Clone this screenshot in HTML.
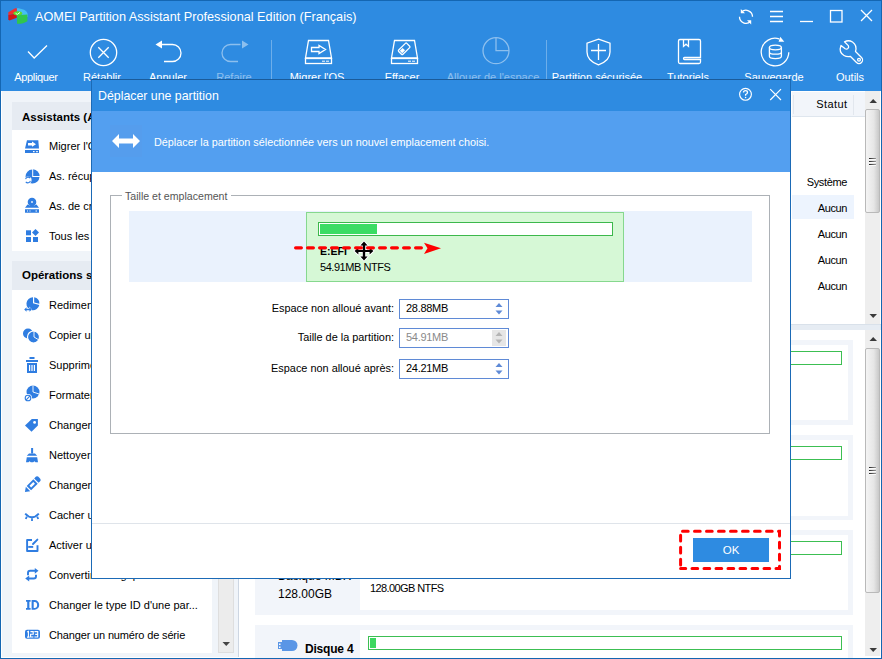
<!DOCTYPE html>
<html><head><meta charset="utf-8">
<style>
*{margin:0;padding:0;box-sizing:border-box}
html,body{width:882px;height:659px;overflow:hidden;background:#fff}
body{position:relative;font-family:"Liberation Sans",sans-serif;font-size:11px;color:#000}
.a{position:absolute}
.t{position:absolute;white-space:nowrap;line-height:1}
svg{position:absolute;overflow:visible}
</style></head><body>

<!-- window background -->
<div class="a" style="left:0;top:0;width:882px;height:659px;background:#2e8be1"></div>
<!-- main content area -->
<div class="a" style="left:1px;top:91px;width:880px;height:567px;background:#fff"></div>

<!-- LEFT PANEL -->
<div id="left" class="a" style="left:2px;top:91px;width:236px;height:566px;background:#f0f4f9"></div>
<div class="a" style="left:238px;top:91px;width:1px;height:566px;background:#cdd6e2"></div>
<div class="a" style="left:12px;top:102px;width:200px;height:28px;background:#e6ebf2"></div>
<div class="a" style="left:12px;top:130px;width:200px;height:121px;background:#fff"></div>
<div class="a" style="left:12px;top:261px;width:200px;height:29px;background:#e6ebf2"></div>
<div class="a" style="left:12px;top:290px;width:200px;height:363px;background:#fff"></div>
<div class="a" style="left:218px;top:290px;width:16px;height:363px;background:#ececec;border:1px solid #dedede"></div>
<svg width="10" height="10" style="left:222px;top:641px"><path d="M0.5,1 H8 L4.25,5 Z" fill="#444"/></svg>
<div style="position:absolute;left:0;top:0;font-size:11px;color:#000">
<div class="t" style="left:22px;top:112px;font-weight:bold;font-size:11.5px">Assistants (Alt+A)</div>
<div class="t" style="left:49px;top:141px">Migrer l'OS vers SSD</div>
<div class="t" style="left:49px;top:171px">As. récupération de partition</div>
<div class="t" style="left:49px;top:201px">As. de création de média</div>
<div class="t" style="left:49px;top:231px">Tous les outils</div>
<div class="t" style="left:22px;top:270px;font-weight:bold;font-size:11.5px">Opérations sur la partition</div>
<div class="t" style="left:49px;top:300px">Redimensionner/Déplacer</div>
<div class="t" style="left:49px;top:330px">Copier une partition</div>
<div class="t" style="left:49px;top:360px">Supprimer la partition</div>
<div class="t" style="left:49px;top:390px">Formater la partition</div>
<div class="t" style="left:49px;top:420px">Changer la lettre</div>
<div class="t" style="left:49px;top:450px">Nettoyer la partition</div>
<div class="t" style="left:49px;top:480px">Changer l'étiquette</div>
<div class="t" style="left:49px;top:510px">Cacher une partition</div>
<div class="t" style="left:49px;top:540px">Activer une partition</div>
<div class="t" style="left:49px;top:570px">Convertir en logique</div>
<div class="t" style="left:49px;top:600px">Changer le type ID d'une par...</div>
<div class="t" style="left:49px;top:630px;letter-spacing:-0.15px">Changer un numéro de série</div>
</div>
<svg width="240" height="660" style="left:0;top:0" fill="#2f7de1" stroke="none">
  <!-- migrer -->
  <path d="M27,140.2 H38.3 L39,148.5 H25 Z"/>
  <path d="M25,150 H39 V153 H25 Z M33,151 V152.2 H34.6 V151 Z M36.2,151 V152.2 H37.8 V151 Z" fill-rule="evenodd"/>
  <path d="M28,143 H32 V141.6 L36,144.2 L32,146.8 V145.4 H28 Z" fill="#fff"/>
  <!-- recup -->
  <path d="M32.2,169.5 A7,7 0 1 0 39.5,177 H32.2 Z"/>
  <path d="M33.2,169.2 A7,7 0 0 1 39.6,176 H33.2 Z"/>
  <circle cx="28" cy="180" r="3.6" fill="#fff"/>
  <path d="M25.6,179.2 A2.6,2.6 0 0 1 30.2,178.2 M30.4,180.8 A2.6,2.6 0 0 1 25.8,181.8" stroke="#2f7de1" stroke-width="1.1" fill="none"/>
  <!-- creation media -->
  <circle cx="32" cy="202" r="4.3"/>
  <rect x="31.2" y="201.2" width="1.6" height="1.6" fill="#fff"/>
  <path d="M27.5,204.5 Q32,207 36.5,204.5 L39,207.8 H25 Z"/>
  <path d="M25,209.3 H39 V212.8 H25 Z M27,210.5 V211.6 H28 V210.5 Z M29.5,210.5 V211.6 H30.5 V210.5 Z M35.5,210.5 V211.6 H37 V210.5 Z" fill-rule="evenodd"/>
  <!-- tous -->
  <rect x="26" y="230.3" width="5" height="5"/><rect x="26" y="237" width="5" height="5"/><rect x="33" y="237" width="5" height="5"/>
  <path d="M35.5,229 L39,232.5 L35.5,236 L32,232.5 Z"/>
  <!-- redim -->
  <path d="M33,297.2 A6.5,6.5 0 1 0 39.3,305 L33,303.3 Z"/>
  <path d="M34.2,297.3 A6.5,6.5 0 0 1 39.4,303.8 L34.2,302.5 Z"/>
  <path d="M24.2,309.5 L26.5,307.3 V308.7 H29.5 V307.3 L31.8,309.5 L29.5,311.7 V310.3 H26.5 V311.7 Z" stroke="#fff" stroke-width="0.8" paint-order="stroke"/>
  <!-- copier -->
  <circle cx="28" cy="333.5" r="5"/>
  <circle cx="33.5" cy="337" r="6" stroke="#fff" stroke-width="1.2"/>
  <path d="M34,331 V337 L39,340" stroke="#fff" stroke-width="0.9" fill="none"/>
  <!-- supprimer -->
  <rect x="29.5" y="357" width="5" height="2"/><rect x="26" y="360" width="12" height="2"/>
  <path d="M27,363 H37 V373 H27 Z M29,365 V371 H30.2 V365 Z M31.4,365 V371 H32.6 V365 Z M33.8,365 V371 H35 V365 Z" fill-rule="evenodd"/>
  <!-- formater -->
  <circle cx="33" cy="392" r="6.5"/>
  <path d="M33,385.5 V392 L39,394" stroke="#fff" stroke-width="0.9" fill="none"/>
  <circle cx="28" cy="398" r="4" fill="#fff"/>
  <circle cx="28" cy="398" r="2.8" stroke="#2f7de1" stroke-width="1.1" fill="none"/>
  <path d="M26.2,399.8 L29.8,396.2" stroke="#2f7de1" stroke-width="1.1"/>
  <!-- changer lettre: tag -->
  <path d="M25,425.4 L31.8,418.9 H37.9 V425.6 L31.5,431.8 Z"/><circle cx="34.6" cy="422.4" r="1.4" fill="#fff"/>
  <!-- nettoyer: brush -->
  <rect x="31.1" y="448" width="2" height="5.5"/>
  <path d="M29,453.4 H35 L37.2,455.8 H26.8 Z"/>
  <path d="M26.8,457.2 H37.2 L38,462.2 H35.5 L34.5,461.2 L33.2,462.2 H30.8 L29.5,461.2 L28.5,462.2 H26 Z"/>
  <!-- changer etiquette: pencil -->
  <g transform="translate(32,485) rotate(-45)">
    <path d="M-10,0 L-5.6,-3.1 V3.1 Z"/>
    <path d="M-4.4,-3.1 H5 V3.1 H-4.4 Z M-2.4,-1.2 V1.2 H3 V-1.2 Z" fill-rule="evenodd"/>
    <path d="M6.2,-3.1 H8.4 A2,3.1 0 0 1 8.4,3.1 H6.2 Z"/>
  </g>
  <!-- cacher: eye closed -->
  <path d="M25.2,513.6 Q32,521 38.8,513.6" stroke="#2f7de1" stroke-width="1.9" fill="none"/>
  <path d="M26.8,516.6 L25.8,519 M32,518.3 V521 M37.2,516.6 L38.2,519" stroke="#2f7de1" stroke-width="1.8"/>
  <!-- activer -->
  <path d="M32,540 H27.1 V551 H37.5 V545.2" stroke="#2f7de1" stroke-width="1.9" fill="none" stroke-linejoin="round"/>
  <path d="M28.2,546.9 H33.2" stroke="#2f7de1" stroke-width="1.9"/>
  <path d="M33,544 L37.4,539.6" stroke="#2f7de1" stroke-width="1.9" stroke-linecap="round"/>
  <!-- convertir -->
  <path d="M28,575.2 V573 Q28,570.8 30.2,570.8 H35.5 M36,574.8 V576.5 Q36,578.5 33.8,578.5 H28.5" stroke="#2f7de1" stroke-width="1.9" fill="none"/>
  <path d="M34.8,567.9 L38.5,570.8 L34.8,573.7 Z M29.2,575.6 L25.2,578.5 L29.2,581.4 Z"/>
  <!-- ID -->
  <path d="M26,600 H30.6 V601.8 H29.4 V608 H30.6 V609.8 H26 V608 H27.2 V601.8 H26 Z"/>
  <path d="M31.6,600 H34.6 A4.6,4.9 0 0 1 34.6,609.8 H31.6 Z M33.7,601.9 V607.9 H34.6 A2.5,3 0 0 0 34.6,601.9 Z" fill-rule="evenodd"/>
  <!-- 123 -->
  <rect x="25" y="629.8" width="15" height="9" rx="2"/>
  <path d="M27.2,632 L28.4,631.4 V637.1 M27,637.1 H29.6 M30.4,631.6 H33.2 V634.2 H30.6 V637 H33.4 M34.4,631.6 H37.7 V637 H34.4 M35.2,634.3 H37.7" stroke="#fff" stroke-width="1.15" fill="none"/>
</svg>


<!-- RIGHT PANEL -->
<div class="a" style="left:792px;top:92px;width:73px;height:25px;background:#f2f5fa;border-bottom:1px solid #dfe6ee"></div>
<div class="a" style="left:853px;top:95px;width:1px;height:20px;background:#e2e7ee"></div>
<div class="a" style="left:793px;top:95px;width:1px;height:19px;background:#e2e7ee"></div>
<div class="t" style="left:700px;top:99px;width:147.4px;text-align:right;letter-spacing:0.4px">Statut</div>
<div class="a" style="left:792px;top:195px;width:62px;height:24px;background:#edf4fe"></div>
<div class="t" style="left:700px;top:177px;width:147px;text-align:right;letter-spacing:-0.35px">Système</div>
<div class="t" style="left:700px;top:203px;width:147px;text-align:right;letter-spacing:-0.4px">Aucun</div>
<div class="t" style="left:700px;top:229px;width:147px;text-align:right;letter-spacing:-0.4px">Aucun</div>
<div class="t" style="left:700px;top:255px;width:147px;text-align:right;letter-spacing:-0.4px">Aucun</div>
<div class="t" style="left:700px;top:281px;width:147px;text-align:right;letter-spacing:-0.4px">Aucun</div>
<!-- top scrollbar -->
<div class="a" style="left:865px;top:91px;width:15px;height:233px;background:#eeeeee"></div>
<div class="a" style="left:865px;top:109px;width:15px;height:104px;background:linear-gradient(to right,#f4f4f4,#e6e6e6 60%,#c8c8c8);border:1px solid #b9b9b9;border-radius:2px"></div>
<svg width="16" height="240" style="left:865px;top:91px">
 <path d="M4.5,12 H12 L8.2,8 Z" fill="#3a3a3a"/>
 <path d="M4.5,223 H12 L8.2,227 Z" fill="#3a3a3a"/>
 <defs><linearGradient id="gr" x1="0" x2="1"><stop offset="0" stop-color="#222"/><stop offset="1" stop-color="#999"/></linearGradient></defs><path d="M4,67.5 H11 M4,70.5 H11 M4,73.5 H11" stroke="url(#gr)" stroke-width="1.1"/><path d="M4,68.5 H11 M4,71.5 H11 M4,74.5 H11" stroke="#fff" stroke-width="1" stroke-opacity="0.8"/>
</svg>
<!-- splitter -->
<div class="a" style="left:239px;top:324px;width:642px;height:6px;background:#e6ecf3;border-top:1px solid #d9e1ea"></div>
<!-- bottom scrollbar -->
<div class="a" style="left:865px;top:330px;width:15px;height:326px;background:#eeeeee"></div>
<div class="a" style="left:865px;top:348px;width:15px;height:245px;background:linear-gradient(to right,#f4f4f4,#e6e6e6 60%,#c8c8c8);border:1px solid #b9b9b9;border-radius:2px"></div>
<svg width="16" height="330" style="left:865px;top:330px">
 <path d="M4.5,11 H12 L8.2,7 Z" fill="#3a3a3a"/>
 <path d="M4.5,318 H12 L8.2,322 Z" fill="#3a3a3a"/>
 <path d="M4,137.5 H11 M4,140.5 H11 M4,143.5 H11" stroke="url(#gr)" stroke-width="1.1"/><path d="M4,138.5 H11 M4,141.5 H11 M4,144.5 H11" stroke="#fff" stroke-width="1" stroke-opacity="0.8"/>
</svg>
<!-- disk cards -->
<div class="a" style="left:255px;top:340px;width:598px;height:85px;background:#f2f5fa"><div class="a" style="left:105px;top:5px;width:488px;height:75px;background:#fff"></div><div class="a" style="left:113px;top:11px;width:474px;height:14px;border:1px solid #3cbf52;background:#fff"></div></div>
<div class="a" style="left:255px;top:435px;width:598px;height:85px;background:#f2f5fa"><div class="a" style="left:105px;top:5px;width:488px;height:76px;background:#fff"></div><div class="a" style="left:113px;top:11px;width:474px;height:14px;border:1px solid #3cbf52;background:#fff"></div></div>
<div class="a" style="left:255px;top:530px;width:598px;height:85px;background:#f2f5fa"><div class="a" style="left:105px;top:5px;width:488px;height:75px;background:#fff"></div><div class="a" style="left:113px;top:11px;width:474px;height:14px;border:1px solid #3cbf52;background:#fff"></div>
 <div class="t" style="left:23px;top:40px;font-size:12px">Basique MBR</div>
 <div class="t" style="left:23px;top:58px;font-size:12px">128.00GB</div>
 <div class="t" style="left:115px;top:53px;letter-spacing:-0.6px">128.00GB NTFS</div>
</div>
<div class="a" style="left:255px;top:625px;width:598px;height:40px;background:#f2f5fa"><div class="a" style="left:105px;top:5px;width:488px;height:40px;background:#fff"></div><div class="a" style="left:113px;top:11px;width:474px;height:14px;border:1px solid #3cbf52;background:#fff"><div class="a" style="left:1px;top:1px;width:6px;height:10px;background:#3cd860"></div></div>
 <div class="t" style="left:50px;top:18px;font-size:12px;font-weight:bold;letter-spacing:-0.2px">Disque 4</div>
 <svg width="24" height="14" style="left:22px;top:14px"><path d="M5,1 H15 A5.5,5.5 0 0 1 15,12 H5 Z" fill="#5a96e6"/><rect x="1" y="3" width="4" height="7" fill="#5a96e6"/><rect x="2" y="4.5" width="1.5" height="1.5" fill="#fff"/><rect x="2" y="7.5" width="1.5" height="1.5" fill="#fff"/></svg>
</div>

<!-- title bar -->
<div class="t" style="left:35px;top:11px;font-size:12.7px;color:#fff">AOMEI Partition Assistant Professional Edition (Français)</div>


<!-- TOOLBAR ICONS -->
<svg width="882" height="91" style="left:0;top:0" fill="none" stroke="#fff" stroke-width="1.3">
  <!-- logo -->
  <g stroke="none">
    <path d="M16.7,8.2 C22,8.2 27.6,10.5 27.7,14.2 V17 L22,15.2 C22,13 20,11.6 16.7,11.5 Z" fill="#45bef2"/>
    <path d="M8.3,12.2 L15.2,8.2 H16.8 V13.5 L8.3,15 Z" fill="#f03030"/>
    <path d="M8.3,15 L16.8,13.5 V17.8 L9.5,20.5 L8.3,19.2 Z" fill="#d41616"/>
    <path d="M17,15.2 L27.4,14.4 V21.2 C25,23 20.5,24 17,23.8 Z" fill="#30c64c"/>
    <ellipse cx="17.8" cy="13.3" rx="4.4" ry="2.1" fill="#5ddc2a"/>
    <path d="M15.6,13.3 L17.3,14.4 L20,12.4" stroke="#e8ffe0" stroke-width="1" fill="none"/>
  </g>
  <!-- window controls -->
  <path d="M741.4,12.2 A6.5,6.5 0 0 1 752.5,16.8 M739.5,16.8 A6.5,6.5 0 0 0 750.6,21.4"/>
  <path d="M740.8,9 L740.8,13.3 L745,13.3 Z M751.2,24.6 L751.2,20.3 L747,20.3 Z" fill="#fff" stroke="none"/>
  <path d="M770,11.5 H783 M770,16.5 H783 M770,21.5 H783"/>
  <path d="M800,21.5 H813"/>
  <rect x="830.5" y="10.5" width="11.5" height="11.5"/>
  <path d="M861,10 L872,21 M872,10 L861,21"/>
  <!-- Appliquer -->
  <path d="M28,51.5 L34.2,58 L47,45.5"/>
  <!-- Retablir -->
  <circle cx="103.5" cy="52.5" r="13.2"/>
  <path d="M98.3,47.3 L108.7,57.7 M108.7,47.3 L98.3,57.7"/>
  <!-- Annuler -->
  <path d="M161.5,44.5 H172.5 A8.5,8.5 0 0 1 172.5,61.5 H164"/>
  <path d="M155.5,44.5 L162,40.5 L162,48.5 Z" fill="#fff" stroke="none"/>
  <!-- Refaire -->
  <g opacity="0.45">
  <path d="M240.5,44.5 H230.5 A8.5,8.5 0 0 0 230.5,61.5 H238"/>
  <path d="M248.5,44.5 L242,40.5 L242,48.5 Z" fill="#fff" stroke="none"/>
  </g>
  <path d="M271.5,40 V91" stroke-opacity="0.3" stroke-width="1"/>
  <!-- Migrer OS -->
  <g id="disk">
  <path d="M308.5,40.5 H328.5 L331.5,58 H305.5 Z"/>
  <rect x="305.5" y="58.5" width="26" height="5"/>
  <path d="M322,61.2 H325 M326,61.2 H329" stroke-width="1"/>
  </g>
  <path d="M311.5,47.5 H319 V45.5 L325.5,49.5 L319,53.5 V51.5 H311.5 Z"/>
  <!-- Effacer -->
  <g transform="translate(86,0)">
  <path d="M308.5,40.5 H328.5 L331.5,58 H305.5 Z"/>
  <rect x="305.5" y="58.5" width="26" height="5"/>
  <path d="M322,61.2 H325 M326,61.2 H329" stroke-width="1"/>
  </g>
  <g transform="rotate(-45 404 49)">
  <rect x="398.5" y="46" width="11.5" height="6" rx="1"/>
  <rect x="399.8" y="47.3" width="4" height="3.4" fill="#fff" stroke="none"/>
  </g>
  <!-- Allouer -->
  <g opacity="0.45">
  <circle cx="496" cy="50.7" r="13"/>
  <path d="M496,37.7 V50.7 H509"/>
  </g>
  <path d="M546.5,40 V91" stroke-opacity="0.3" stroke-width="1"/>
  <!-- Partition securisee -->
  <path d="M598.5,39.2 L610,43.2 V52 C610,58.5 605,62.5 598.5,64.8 C592,62.5 587,58.5 587,52 V43.2 Z"/>
  <path d="M591,50.5 H606 M598.5,44 V60"/>
  <!-- Tutoriels -->
  <path d="M700.5,57.5 H684.5 A1,1 0 0 0 684.5,59.5 H700.5 V62 Q700.5,63.5 699,63.5 H680 Q678.5,63.5 678.5,62 V41 Q678.5,39.5 680,39.5 H699 Q700.5,39.5 700.5,41 Z"/>
  <path d="M683.5,39.5 V46.4 L686,44.2 L688.5,46.4 V39.5"/>
  <!-- Sauvegarde -->
  <path d="M779.2,38.9 A13.8,13.8 0 1 0 788.8,52.3"/>
  <path d="M780.2,36.8 L784.3,41.8 L778.6,41.8 Z" fill="#fff" stroke="none"/>
  <ellipse cx="775.4" cy="47.5" rx="6" ry="2.3"/>
  <path d="M769.4,47.5 V56.3 A6,2.3 0 0 0 781.4,56.3 V47.5 M769.4,51.9 A6,2.3 0 0 0 781.4,51.9"/>
  <!-- Outils -->
  <path d="M841,45.5 C839.5,49.5 840.5,53.5 844,55.5 C846,56.7 848.5,56.8 850.5,56.5 L856.5,62.5 A2.9,2.9 0 0 0 861.5,57.5 L855.5,51.5 C856.5,48 855.5,44 852.5,42 C850,40.5 847,40.5 844.5,41.8 L848.3,45.6 A2.3,2.3 0 0 1 845.2,48.8 Z" stroke-linejoin="round"/>
  <circle cx="859" cy="59.8" r="1.4"/>
</svg>
<!-- TOOLBAR LABELS -->
<div style="position:absolute;left:0;top:0;font-size:11px;letter-spacing:0px;color:#fff">
<div class="t" style="left:-24px;top:72px;width:120px;text-align:center;letter-spacing:-0.35px">Appliquer</div>
<div class="t" style="left:42px;top:72px;width:120px;text-align:center">Rétablir</div>
<div class="t" style="left:108px;top:72px;width:120px;text-align:center">Annuler</div>
<div class="t" style="left:174px;top:72px;width:120px;text-align:center;opacity:0.45">Refaire</div>
<div class="t" style="left:257px;top:72px;width:120px;text-align:center">Migrer l'OS</div>
<div class="t" style="left:342px;top:72px;width:120px;text-align:center">Effacer</div>
<div class="t" style="left:433px;top:72px;width:120px;text-align:center;opacity:0.45">Allouer de l'espace</div>
<div class="t" style="left:537px;top:72px;width:120px;text-align:center">Partition sécurisée</div>
<div class="t" style="left:628px;top:72px;width:120px;text-align:center">Tutoriels</div>
<div class="t" style="left:714px;top:72px;width:120px;text-align:center">Sauvegarde</div>
<div class="t" style="left:790px;top:72px;width:120px;text-align:center">Outils</div>
</div>

<!-- window border -->
<div class="a" style="left:0;top:0;width:882px;height:659px;border:1px solid #1466b2"></div>

<!-- DIALOG -->
<div id="dlg" class="a" style="left:91px;top:79px;width:700px;height:500px;background:#fff;border:1px solid #1b6ab6;border-top-color:#1a5b9a">
  <div class="a" style="left:0;top:0;width:698px;height:31px;background:#2e8be1"></div>
  <div class="a" style="left:0;top:31px;width:698px;height:61px;background:#539ff0"></div>
  <div class="t" style="left:6px;top:10px;font-size:12.35px;color:#fff">Déplacer une partition</div>
  <svg width="700" height="100" style="left:-1px;top:-1px" fill="none" stroke="#fff" stroke-width="1.2">
    <circle cx="654.5" cy="15.3" r="5.9" stroke-width="1.15"/>
    <path d="M652.5,13.6 Q652.5,11.7 654.5,11.7 Q656.5,11.7 656.5,13.5 Q656.5,14.7 654.6,15.5 V16.7" stroke-width="1.3"/>
    <circle cx="654.6" cy="18.5" r="0.8" fill="#fff" stroke="none"/>
    <path d="M679.2,10.2 L690,21 M690,10.2 L679.2,21" stroke-width="1.15"/>
    <rect x="19" y="46" width="32" height="32" fill="#559ded" stroke="none"/>
    <path d="M21,62 L28,55 V59.5 H42 V55 L49,62 L42,69 V64.5 H28 V69 Z" fill="#fff" stroke="none"/>
  </svg>
  <div class="t" style="left:62px;top:57px;font-size:10.83px;color:#fff">Déplacer la partition sélectionnée vers un nouvel emplacement choisi.</div>
  <!-- group box -->
  <div class="a" style="left:18px;top:115px;width:660px;height:239px;border:1px solid #acb1b6"></div>
  <div class="t" style="left:30px;top:111px;padding:0 4px 0 3px;background:#fff;color:#555;font-size:10.6px">Taille et emplacement</div>
  <div class="a" style="left:37px;top:131px;width:623px;height:71px;background:#eaf2fd"></div>
  <div class="a" style="left:214px;top:132px;width:318px;height:70px;background:#d6f8d6;border:1px solid #86d88e"></div>
  <div class="a" style="left:226px;top:142px;width:295px;height:14px;border:1px solid #3cb84b;background:#fff"><div class="a" style="left:1px;top:1px;width:57px;height:10px;background:#3cdc64"></div></div>
  <div class="t" style="left:228px;top:166px;font-weight:bold;font-size:10.5px">E:EFI</div>
  <div class="t" style="left:228px;top:182px;letter-spacing:-0.45px">54.91MB NTFS</div>
  <!-- fields -->
  <div class="t" style="left:100px;top:223px;width:202px;text-align:right;font-size:10.9px">Espace non alloué avant:</div>
  <div class="t" style="left:100px;top:252px;width:202px;text-align:right;font-size:10.9px">Taille de la partition:</div>
  <div class="t" style="left:100px;top:283px;width:202px;text-align:right;font-size:10.9px">Espace non alloué après:</div>
  <div class="a" style="left:307px;top:219px;width:110px;height:20px;border:1px solid #5f8ad6"></div>
  <div class="a" style="left:307px;top:248px;width:110px;height:20px;border:1px solid #5f8ad6"></div>
  <div class="a" style="left:307px;top:279px;width:110px;height:20px;border:1px solid #5f8ad6"></div>
  <div class="t" style="left:314px;top:223px;letter-spacing:-0.3px">28.88MB</div>
  <div class="t" style="left:314px;top:252px;letter-spacing:-0.3px;color:#8a8a8a">54.91MB</div>
  <div class="t" style="left:314px;top:283px;letter-spacing:-0.3px">24.21MB</div>
  <div class="a" style="left:400px;top:250px;width:14px;height:16px;background:#e6e6e6"></div>
  <svg width="20" height="90" style="left:400px;top:219px">
    <path d="M3.5,8 H10.5 L7,4 Z M3.5,11.5 H10.5 L7,15.5 Z" fill="#5f8ad6"/>
    <path d="M3.5,37 H10.5 L7,33 Z M3.5,40.5 H10.5 L7,44.5 Z" fill="#b5b5b5"/>
    <path d="M3.5,68 H10.5 L7,64 Z M3.5,71.5 H10.5 L7,75.5 Z" fill="#5f8ad6"/>
  </svg>
  <!-- footer -->
  <div class="a" style="left:0;top:443px;width:698px;height:1px;background:#dfe4ea"></div>
  <div class="a" style="left:601px;top:458px;width:76px;height:24px;background:#2e8be1"></div>
  <div class="t" style="left:601px;top:465px;width:76px;text-align:center;color:#fff;font-size:11.5px">OK</div>
</div>
<!-- move cursor -->
<svg width="882" height="659" style="left:0;top:0">
  <g fill="#000" stroke="#fff" stroke-width="2" stroke-linejoin="round">
    <path d="M364,241.6 L367.6,245.4 H365.2 V250 H369.6 V247.4 L373.4,251 L369.6,254.6 V252 H365.2 V256.6 H367.6 L364,260.4 L360.4,256.6 H362.8 V252 H358.4 V254.6 L354.6,251 L358.4,247.4 V250 H362.8 V245.4 H360.4 Z"/>
  </g>
  <path d="M364,241.6 L367.6,245.4 H365.2 V250 H369.6 V247.4 L373.4,251 L369.6,254.6 V252 H365.2 V256.6 H367.6 L364,260.4 L360.4,256.6 H362.8 V252 H358.4 V254.6 L354.6,251 L358.4,247.4 V250 H362.8 V245.4 H360.4 Z" fill="#000"/>
</svg>
<!-- annotations -->
<svg width="882" height="659" style="left:0;top:0" fill="none" stroke="#f00">
  <path d="M295.6,247.8 H422" stroke-width="3.2" stroke-linecap="round" stroke-dasharray="5.8 6.2"/>
  <path d="M424,242.7 L441,248.2 L424,254 L427.5,248.2 Z" fill="#f00" stroke="none"/>
  <path d="M682.5,531.3 H779.5 V568.5 H680.6" stroke-width="3" stroke-linecap="round" stroke-dasharray="5.7 6.3"/>
  <path d="M680.6,568.5 V531.3" stroke-width="3" stroke-linecap="round" stroke-dasharray="5.7 6.3" stroke-dashoffset="8.5"/>
</svg>
</body></html>
